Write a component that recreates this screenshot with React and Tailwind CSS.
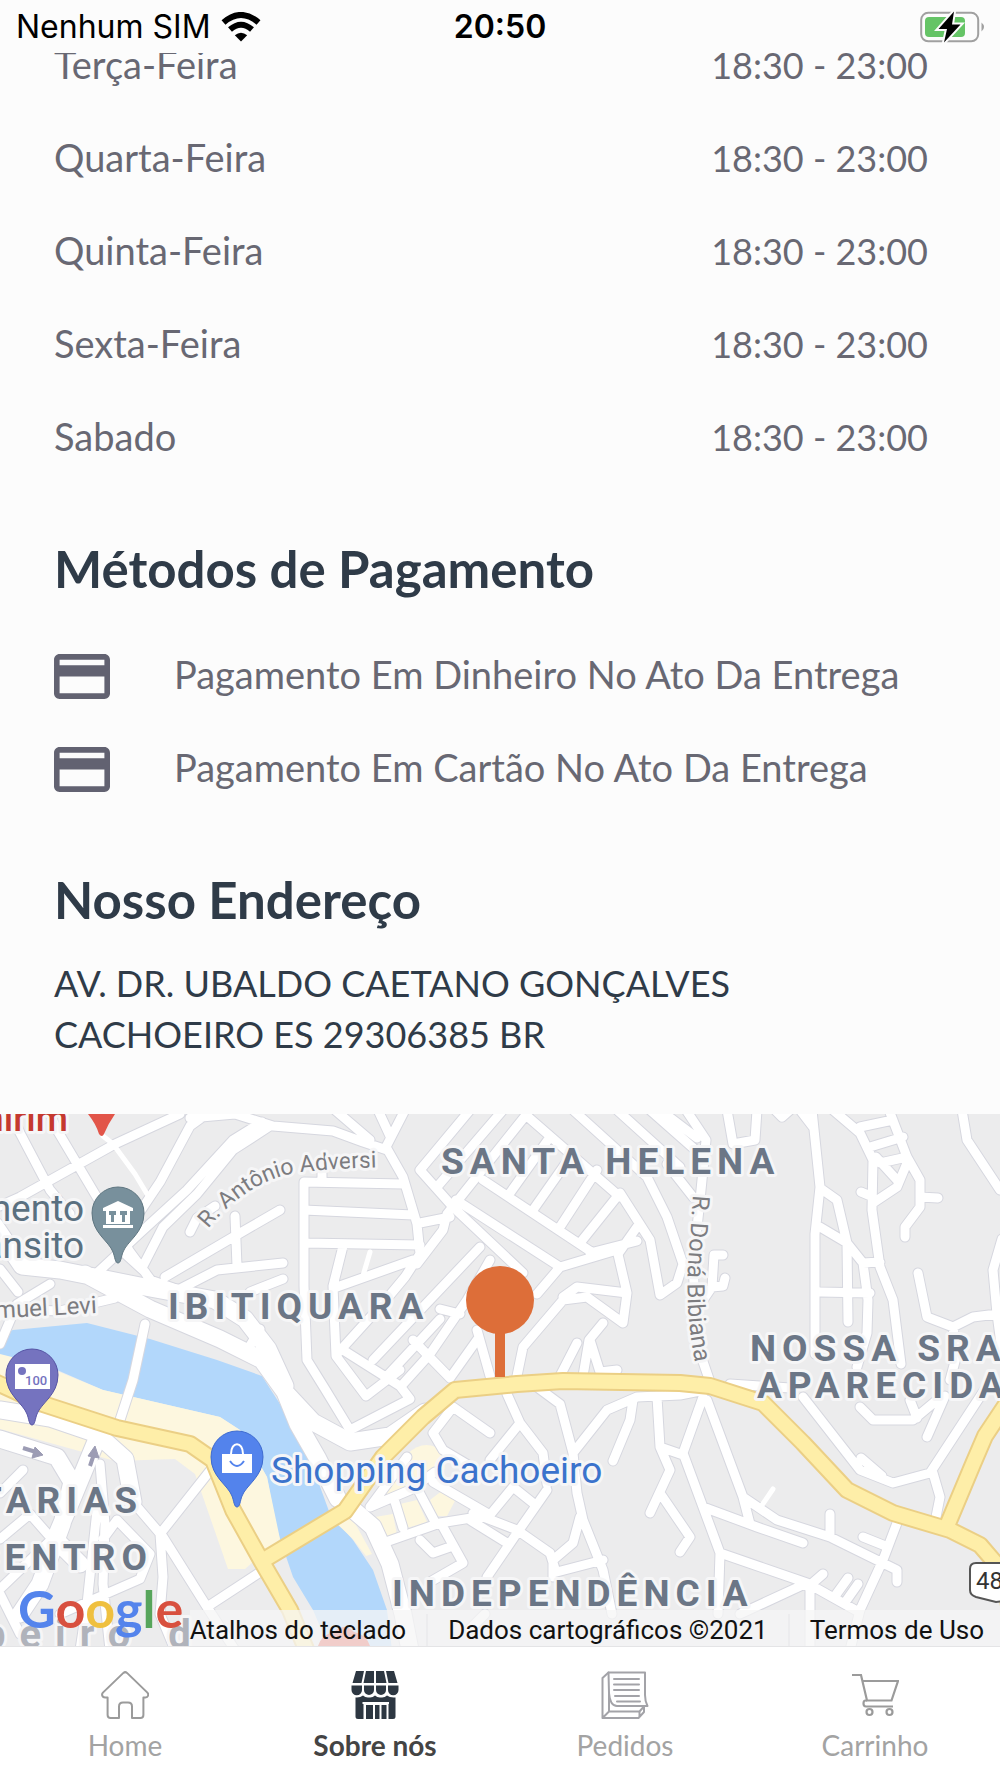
const hours = [
  { day: "Terça-Feira", time: "18:30 - 23:00" },
  { day: "Quarta-Feira", time: "18:30 - 23:00" },
  { day: "Quinta-Feira", time: "18:30 - 23:00" },
  { day: "Sexta-Feira", time: "18:30 - 23:00" },
  { day: "Sabado", time: "18:30 - 23:00" },
];

const payments = [
  "Pagamento Em Dinheiro No Ato Da Entrega",
  "Pagamento Em Cartão No Ato Da Entrega",
];

// ================= MAP DATA =================
const streets = [
  // north west
  "M0 92 L20 83 L115 30 L180 0",
  "M12 0 L20 19 L50 76 L70 100",
  "M50 0 L57 16 L95 80 L130 138 L150 165",
  "M215 -6 L190 12 L160 68 L125 120",
  "M97 159 L140 119 L187 76 L233 26 L262 8",
  "M143 152 L163 113 L197 80 L233 36 L270 12",
  "M190 4 L235 0 L273 12 L333 17 L363 28 L387 36",
  "M335 -4 L370 26",
  "M378 -4 L390 22",
  "M405 -4 L386 33 L403 63 L417 110 L420 140 L405 163 L385 187 L337 240",
  "M190 118 L197 104 L215 92",
  "M235 102 L237 152",
  "M280 96 L235 122 L165 163",
  "M283 149 L217 156 L180 175",
  "M283 165 L250 178",
  "M122 137 L145 158 L150 166 L185 178",
  "M304 69 L304 172 L307 246 L325 275 L350 316",
  "M304 68 L403 70",
  "M304 96 L413 101",
  "M304 129 L420 131",
  "M322 52 L322 68",
  "M343 132 L333 172 L336 242 L366 282 L400 256",
  "M260 215 L245 240",
  "M0 155 L18 178",
  "M50 170 L17 190 L0 230",
  "M0 195 L60 197 L115 184",
  // santa helena
  "M470 -4 L420 56 L453 93 L523 159",
  "M503 -4 L437 73",
  "M530 -4 L447 100 L443 116 L417 150",
  "M527 2 L620 83",
  "M573 -4 L647 63 L667 103 L683 150 L677 169 L660 181 L650 126 L620 79",
  "M617 -4 L680 53",
  "M650 -4 L700 40",
  "M483 66 L593 139",
  "M456 86 L560 153",
  "M550 23 L510 79",
  "M573 39 L533 96",
  "M597 56 L560 113",
  "M620 79 L580 129",
  "M590 139 L637 127",
  "M637 113 L618 140",
  "M537 180 L560 153 L617 136 L627 179 L623 209 L587 183 L563 186 L523 233 L517 262",
  "M563 183 L577 173 L627 179",
  "M603 209 L589 226 L583 262",
  "M577 229 L560 262",
  "M590 226 L600 258 L617 256",
  "M420 109 L450 103",
  "M480 133 L373 246",
  "M413 146 L337 173",
  "M490 146 L467 186 L430 240 L403 270",
  "M440 195 L460 200",
  "M343 236 L400 272 L410 285 L350 316",
  "M413 226 L450 264",
  "M477 216 L490 262",
  "M477 226 L450 264",
  "M387 262 L440 205",
  // north east
  "M660 -4 L697 24",
  "M686 -4 L706 26 L700 86 L693 150 L697 230 L710 268",
  "M727 -4 L733 30 L755 26 L757 -4",
  "M775 -4 L782 3 L790 -4",
  "M667 50 L693 83",
  "M723 141 L714 141 L712 173 L723 172 L725 164",
  "M712 173 L697 195",
  "M800 -4 L813 13",
  "M812 -4 L820 73 L815 120 L815 240",
  "M820 74 L837 86 L847 129 L863 149 L868 186 L867 219 L857 253",
  "M820 113 L847 129 L848 208",
  "M820 178 L870 179",
  "M863 149 L880 148",
  "M833 -4 L860 19 L873 46 L872 96 L880 153 L893 186 L901 250",
  "M889 -4 L907 43 L920 66 L920 93 L905 113 L905 123",
  "M920 83 L938 84",
  "M907 49 L897 73 L873 89",
  "M860 13 L893 6",
  "M870 33 L903 23",
  "M880 49 L907 43",
  "M876 43 L897 66",
  "M861 78 L873 83",
  "M962 -4 L967 26 L1000 76",
  "M1002 125 L993 156 L997 200 L1003 245",
  "M918 159 L927 203 L953 213 L973 203 L997 200",
  "M953 213 L957 240 L950 266",
  // east
  "M730 270 L790 274",
  "M803 283 L860 356 L893 369 L930 359 L985 275",
  "M861 344 L882 362",
  "M933 359 L940 383 L935 408",
  "M860 293 L873 306 L913 306 L937 286",
  "M945 282 L927 323",
  "M910 286 L917 304",
  "M703 283 L683 339 L720 439 L718 500",
  "M707 286 L743 383 L750 410",
  "M660 333 L683 341",
  "M703 393 L757 413 L803 429",
  "M743 383 L777 406 L830 423 L897 456 L897 468",
  "M830 400 L830 423",
  "M897 409 L883 446 L860 496 L850 536",
  "M863 423 L883 431",
  "M720 439 L807 469 L857 497",
  "M807 469 L740 500",
  "M810 475 L810 536",
  "M823 460 L808 473",
  "M848 464 L835 482",
  "M858 470 L846 487",
  // independencia
  "M453 293 L490 319",
  "M453 293 L433 319 L443 336 L475 355",
  "M507 280 L520 309 L543 339 L547 370",
  "M520 309 L490 346",
  "M537 273 L560 290 L573 339 L577 379 L583 406 L603 456 L612 500",
  "M573 339 L607 296 L637 283 L680 281 L705 276",
  "M633 286 L630 306 L613 347",
  "M657 283 L660 333 L670 356 L650 399",
  "M660 379 L690 423 L680 438",
  "M580 403 L573 429 L553 446 L553 463",
  "M553 459 L603 446",
  "M473 399 L517 416 L550 439 L555 455",
  "M383 429 L440 409 L490 401 L513 373 L533 389",
  "M433 368 L490 401",
  "M547 376 L517 419 L487 463",
  "M470 406 L507 429",
  "M443 413 L463 449 L430 468",
  "M420 426 L433 439 L450 433",
  "M407 343 L370 393 L410 376 L435 358",
  "M395 388 L403 414",
  "M418 376 L435 408",
  "M485 500 L470 515",
  // centro
  "M145 210 L133 266 L120 306",
  "M213 353 L160 420 L163 463 L160 500 L175 536",
  "M133 388 L163 423 L207 493 L235 536",
  "M207 493 L262 457",
  "M23 356 L0 379",
  "M97 396 L87 490 L80 536",
  "M100 350 L105 410 L103 470 L110 536",
  "M117 406 L150 440 L140 465 L60 500",
  "M117 406 L103 425",
  "M0 425 L30 400 L52 425 L0 475",
  "M0 480 L20 520",
];

const avenues = [
  "M-5 112 L22 152 L60 156 L100 164 L150 174 L215 186 L245 205 L268 235 L285 272",
  "M85 160 L150 195 L220 225 L262 246 L285 278 L298 310 L318 345 L338 385",
  "M285 278 L313 308 L350 328 L390 322 L425 298",
  "M350 393 L373 413 L390 450 L403 500 L410 536",
  "M0 296 L50 304 L97 320 L125 345 L133 388",
  "M0 325 L57 343 L72 368 L62 410 L40 470 L20 500",
  "M97 325 L73 383 L55 425 L80 450",
];

const highways = [
  "M-5 268 L43 290 L117 314 L190 330 L213 346 L233 396 L262 448 L290 496 L308 540",
  "M262 447 L345 397 L383 343 L423 303 L455 276 L517 270 L563 267 L680 269 L710 272 L763 289 L803 329 L847 376 L893 399 L950 416 L980 431 L1005 460 L1010 500",
  "M947 412 L973 350 L985 322 L1005 292",
];

// ================= ICONS =================
function CardIcon() {
  return (
    <svg viewBox="2 4 20 16" className="h-[45px] w-14 shrink-0 fill-[#626271]" aria-hidden="true">
      <path d="M20 4H4c-1.11 0-1.99.89-1.99 2L2 18c0 1.11.89 2 2 2h16c1.11 0 2-.89 2-2V6c0-1.11-.89-2-2-2zm0 14H4v-6h16v6zm0-10H4V6h16v2z" />
    </svg>
  );
}

function HomeIcon() {
  return (
    <svg viewBox="0 0 48 48" className="size-12" fill="none" stroke="#9b9b9b" strokeWidth="2" strokeLinejoin="round" aria-hidden="true">
      <path d="M22.4 1.9 L1.9 21.6 C0.2 23.6 1.3 26.4 4 26.4 H6.6 V44 Q6.6 47 9.6 47 H18 V35.5 Q18 31.5 22 31.5 H27 Q31 31.5 31 35.5 V47 H39.4 Q42.4 47 42.4 44 V26.4 H44.5 C47.2 26.4 48 23.6 46.4 21.6 L26 1.9 Q24.2 0.3 22.4 1.9 Z" />
    </svg>
  );
}

function StoreIcon() {
  return (
    <svg viewBox="0 0 48 48" className="size-12 fill-[#2d3742]" aria-hidden="true">
      <path d="M5 0H13L10.5 12H1.5Z M15 0H23V12H12.5Z M25 0H33L35.5 12H25Z M35 0H43L46.5 12H37.5Z" />
      <path d="M0.5 14.5H11V19a5.2 5.2 0 0 1-10.5 0Z M13 14.5H23V19a5 5 0 0 1-10 0Z M25 14.5H35V19a5 5 0 0 1-10 0Z M37 14.5H47.5V19a5.2 5.2 0 0 1-10.5 0Z" />
      <path d="M4.5 26.5Q9 27 12 24.5Q14.5 27 18 26.5Q21.5 27 24 24.5Q26.5 27 30 26.5Q33.5 27 36 24.5Q39 27 44.5 26.5V45.5Q44.5 48 42 48H37.5V33H38V31H11.5V33H12.5V48H7Q4.5 48 4.5 45.5Z" />
      <path d="M15 34H22V48H15Z M24 34H28.5V48H24Z M30.5 34H35.5V48H30.5Z" />
    </svg>
  );
}

function OrdersIcon() {
  return (
    <svg viewBox="0 0 48 48" className="size-12" fill="none" stroke="#a3a3a8" strokeWidth="2" strokeLinejoin="round" strokeLinecap="round" aria-hidden="true">
      <path d="M7.5 1.5H44V24Q44 30 46.5 35H16Q9 35 8 22Z" />
      <path d="M7.5 1.5L1.5 7V47H37.5L43 41V35 M1.5 47L8 40.5V22 M8 40.5H38.5L42.5 36 M38.5 40.5V46" />
      <path d="M13 8H38 M13 13.5H38 M13 19H38 M14 25H38 M16 30.5H39" />
    </svg>
  );
}

function CartIcon() {
  return (
    <svg viewBox="0 0 48 48" className="size-12" fill="none" stroke="#9b9b9b" strokeWidth="2.2" aria-hidden="true">
      <path d="M1 4H10L16 29.5H40.5L47 10H11.5" />
      <path d="M16 29.5H14.5Q12.5 29.5 12.5 32.5Q12.5 35.5 15 35.5H42" />
      <circle cx="18.5" cy="41" r="3" />
      <circle cx="38.5" cy="41" r="3" />
    </svg>
  );
}

const tabs = [
  { label: "Home", Icon: HomeIcon, active: false },
  { label: "Sobre nós", Icon: StoreIcon, active: true },
  { label: "Pedidos", Icon: OrdersIcon, active: false },
  { label: "Carrinho", Icon: CartIcon, active: false },
];

// ================= STATUS BAR =================
function StatusBar() {
  return (
    <header className="grid h-[53px] shrink-0 grid-cols-3 items-center bg-[#fcfcfc] px-4 font-[Inter,sans-serif] text-[32px] leading-none text-black">
      <div className="flex items-center gap-2.5 whitespace-nowrap">
        <span>Nenhum SIM</span>
        <svg viewBox="0 0 40 30" className="h-[30px] w-10 shrink-0" fill="none" stroke="#000" aria-label="Wi-Fi">
          <path d="M2.5 10.5 Q20 -4.5 37.5 10.5" strokeWidth="6" />
          <path d="M9 17.5 Q20 8 31 17.5" strokeWidth="6" />
          <path d="M20 29.5 L13.8 23.2 Q20 18.2 26.2 23.2 Z" fill="#000" stroke="none" />
        </svg>
      </div>
      <time className="text-center font-semibold">20:50</time>
      <svg viewBox="0 0 64 32" className="h-8 w-16 justify-self-end" aria-label="Bateria carregando">
        <rect x="1.2" y="1.8" width="57" height="28.5" rx="7" fill="none" stroke="#a0a0a0" strokeWidth="2" />
        <path d="M61.5 11.5 Q64 13.5 64 16 Q64 18.5 61.5 20.5 Z" fill="#a0a0a0" />
        <rect x="5" y="6" width="40" height="20" rx="4" fill="#65c466" />
        <path d="M34 0.5 L18.5 18 H27 L24 31.5 L40.5 13.5 H32 Z" fill="#000" stroke="#fcfcfc" strokeWidth="4" paintOrder="stroke" />
      </svg>
    </header>
  );
}

// ================= MAP =================
function Pin({ x, y, color, edge, children }) {
  return (
    <g transform={`translate(${x} ${y})`}>
      <path
        d="M0 50 C-3 50 -3 44 -5 39 C-9 28 -26 20 -26 0 A26 26 0 0 1 26 0 C26 20 9 28 5 39 C3 44 3 50 0 50 Z"
        fill={color}
        stroke={edge}
        strokeWidth="1"
      />
      {children}
    </g>
  );
}

function MapDrawing() {
  return (
    <svg
      viewBox="0 0 1000 532"
      preserveAspectRatio="xMidYMid slice"
      className="absolute inset-0 size-full font-[Roboto,sans-serif]"
      role="img"
      aria-label="Mapa"
    >
      <rect width="1000" height="532" fill="#ececed" />

      {/* river */}
      <path d="M-5 222 L13 216 L87 209 L150 225 L217 246 L262 262 L280 290 L310 345 L330 400 L353 426 L373 456 L387 496 L392 536 L330 536 L313 496 L293 463 L277 416 L267 363 L240 316 L220 303 L103 276 L57 256 L-5 245 Z" fill="#b2d7fb" />

      {/* commercial areas */}
      <g fill="#fdf7df">
        <path d="M0 240 L40 250 L103 276 L220 303 L240 316 L267 363 L280 425 L262 440 L245 455 L228 455 L195 360 L175 345 L115 347 L0 315 Z" />
        <path d="M407 340 Q427 322 445 340 L445 355 L400 385 L372 396 Z" />
        <path d="M375 403 L393 400 L397 421 L382 426 Z" />
        <path d="M400 390 L417 386 L427 408 L407 414 Z" />
        <path d="M430 386 L443 376 L457 383 L447 402 L437 402 Z" />
        <path d="M335 408 L350 400 L372 440 L366 442 L352 424 Z" />
      </g>

      {/* roads */}
      <g fill="none" strokeLinecap="round" strokeLinejoin="round">
        <g stroke="#d6d7df">
          <path d={streets.join(" ")} strokeWidth="11" />
          <path d={avenues.join(" ")} strokeWidth="19" />
        </g>
        <g stroke="#fff">
          <path d="M103 22 L113 30 L135 60 L147 80 M773 375 L760 394 M370 138 L362 165" strokeWidth="5" />
          <path d={streets.join(" ")} strokeWidth="9" />
          <path d={avenues.join(" ")} strokeWidth="17" />
        </g>
        <path d={highways.join(" ")} stroke="#ebcf85" strokeWidth="18" />
        <path d={highways.join(" ")} stroke="#feeea8" strokeWidth="14" />
      </g>

      {/* one way arrows */}
      <g stroke="#9c9cb4" strokeWidth="4" fill="#9c9cb4">
        <path d="M23 334 L36 338 M90 352 L94 340" />
        <path d="M35 333 L43 341 L32 344 Z M88 342 L95 332 L99 344 Z" strokeWidth="1" />
      </g>

      {/* labels */}
      <g stroke="#f6f6f7" strokeWidth="6" strokeLinejoin="round" paintOrder="stroke">
        <g fill="#6b7686" fontSize="37" fontWeight="700" letterSpacing="6">
          <text x="441" y="60">SANTA HELENA</text>
          <text x="168" y="205">IBITIQUARA</text>
          <text x="750" y="247">NOSSA SRA</text>
          <text x="757" y="284">APARECIDA</text>
          <text x="392" y="492">INDEPENDÊNCIA</text>
          <text x="143" y="399" textAnchor="end">SANITARIAS</text>
          <text x="153" y="456" textAnchor="end">CENTRO</text>
        </g>
        <text x="-17" y="534" fill="#b0b3bb" fontSize="40" fontWeight="700" letterSpacing="14">beiro d</text>

        <text x="271" y="369" fill="#3b73cc" fontSize="37">Shopping Cachoeiro</text>
        <text x="84" y="107" fill="#5a7080" fontSize="37" textAnchor="end">Departamento</text>
        <text x="84" y="144" fill="#5a7080" fontSize="37" textAnchor="end">de Trânsito</text>
        <text x="68" y="17" fill="#c5392f" fontSize="37" fontWeight="500" textAnchor="end">Itapemirim</text>

        <g fill="#7c7c80" fontSize="24">
          <text x="97" y="199" textAnchor="end" transform="rotate(-3 97 199)">R. Samuel Levi</text>
          <path id="adversi" d="M208 115 Q248 66 300 58 Q340 54 390 53" fill="none" stroke="none" />
          <text fontSize="23"><textPath href="#adversi">R. Antônio Adversi</textPath></text>
          <path id="bibiana" d="M693 81 L688 153 Q685 205 698 262" fill="none" stroke="none" />
          <text><textPath href="#bibiana">R. Doná Bibiana</textPath></text>
        </g>
      </g>

      {/* road shield */}
      <path d="M1010 449 H976 Q970 449 970 455 V476 Q970 481 976 483 L996 488 L1010 486 Z" fill="#fff" stroke="#555" strokeWidth="2" />
      <text x="976" y="475" fontSize="24" fill="#333">482</text>

      {/* places */}
      <path d="M88 0 H115 Q108 10 104 20 Q102 24 99 20 Q96 10 88 0 Z" fill="#e25549" />
      <path d="M318 532 Q322 520 334 518 Q344 508 354 518 Q366 520 370 532 Z" fill="#e25549" />
      <Pin x="118" y="99" color="#78909c" edge="#5f7681">
        <path d="M0 -12 L15 -5 V-2 H-15 V-5 Z M-12 -2 H12 V11 H-12 Z M-15 12 H15 V15 H-15 Z" fill="#fff" />
        <path d="M-9 -2 H-2 V2 H-4 V9 H-7 V2 H-9 Z M2 -2 H9 V2 H7 V9 H4 V2 H2 Z" fill="#78909c" />
      </Pin>
      <Pin x="32" y="261" color="#7573bf" edge="#5654a5">
        <rect x="-17" y="-11" width="35" height="25" fill="#fff" />
        <circle cx="-10" cy="-4" r="4" fill="#7573bf" />
        <text x="-7" y="10" fontSize="13" fontWeight="500" fill="#7573bf">100</text>
      </Pin>
      <Pin x="237" y="343" color="#5383ec" edge="#3e6bd0">
        <path d="M-15 -3 H15 V16 H-15 Z" fill="#fff" />
        <path d="M-6 -3 C-6 -16 6 -16 6 -3" fill="none" stroke="#fff" strokeWidth="2" />
        <path d="M-7 4 Q0 14 7 4" fill="none" stroke="#5383ec" strokeWidth="2" />
      </Pin>

      {/* store marker */}
      <rect x="495" y="210" width="10" height="53" fill="#dd6e39" />
      <circle cx="500" cy="186" r="34" fill="#dd6e39" />
    </svg>
  );
}

function StoreMap() {
  return (
    <section className="relative min-h-[532px] grow overflow-hidden">
      <MapDrawing />

      <div className="absolute inset-x-0 bottom-0 flex items-end justify-between pl-[18px] font-[Roboto,sans-serif]">
        <a href="#google" className="pb-2 font-[Lato,sans-serif] text-[52px] leading-[60px] font-bold" aria-label="Google">
          <span className="text-[#5484ec]">G</span>
          <span className="text-[#d8503f]">o</span>
          <span className="text-[#efc03f]">o</span>
          <span className="text-[#5484ec]">g</span>
          <span className="text-[#57a55b]">l</span>
          <span className="text-[#d8503f]">e</span>
        </a>
        <div className="flex h-9 items-end bg-[#f5f5f6]/75 text-[26px] leading-8 whitespace-nowrap text-[#111]">
          <button type="button" className="pr-5">Atalhos do teclado</button>
          <span className="border-l-2 border-[#ececee] px-5">Dados cartográficos ©2021</span>
          <a href="#termos" className="border-l-2 border-[#ececee] pr-4 pl-5">Termos de Uso</a>
        </div>
      </div>
    </section>
  );
}

// ================= PAGE =================
export default function App() {
  return (
    <div className="flex min-h-screen flex-col bg-[#fcfcfc] font-[Lato,sans-serif]">

      <StatusBar />

      <main className="flex grow flex-col overflow-hidden">

        {/* scrolled a little, first row goes under the status bar */}
        <ul className="-mt-[33px] pr-[72px] pl-[54px] text-[38px] text-[#686873]">
          {hours.map((item) => (
            <li key={item.day} className="flex h-[93px] items-center justify-between pb-1">
              <span>{item.day}</span>
              <span className="text-[36px]">{item.time}</span>
            </li>
          ))}
        </ul>

        <section className="px-[54px]">
          <h2 className="mt-[54px] text-[51px] leading-[60px] font-bold text-[#2f3b48]">
            Métodos de Pagamento
          </h2>
          <ul className="mt-[31px] text-[38px] text-[#686873]">
            {payments.map((name) => (
              <li key={name} className="flex h-[93px] items-center gap-16">
                <CardIcon />
                <span className="pb-1">{name}</span>
              </li>
            ))}
          </ul>
        </section>

        <section className="px-[54px] pb-[54px]">
          <h2 className="mt-[54px] text-[51px] leading-[60px] font-bold text-[#2f3b48]">
            Nosso Endereço
          </h2>
          <address className="mt-7 text-[36px] leading-[51px] text-[#2f3b48] not-italic">
            AV. DR. UBALDO CAETANO GONÇALVES
            <br />
            CACHOEIRO ES 29306385 BR
          </address>
        </section>

        <StoreMap />
      </main>

      {/* ================= TABS ================= */}
      <nav className="grid h-[132px] shrink-0 grid-cols-4 border-t border-[#e4e4e6] bg-white">
        {tabs.map(({ label, Icon, active }) => (
          <a
            key={label}
            href={`#${label}`}
            className={
              active
                ? "flex flex-col items-center gap-2 pt-6 text-[28px] leading-9 font-bold text-[#444]"
                : "flex flex-col items-center gap-2 pt-6 text-[28px] leading-9 text-[#a3a3a3]"
            }
          >
            <Icon />
            {label}
          </a>
        ))}
      </nav>
    </div>
  );
}
